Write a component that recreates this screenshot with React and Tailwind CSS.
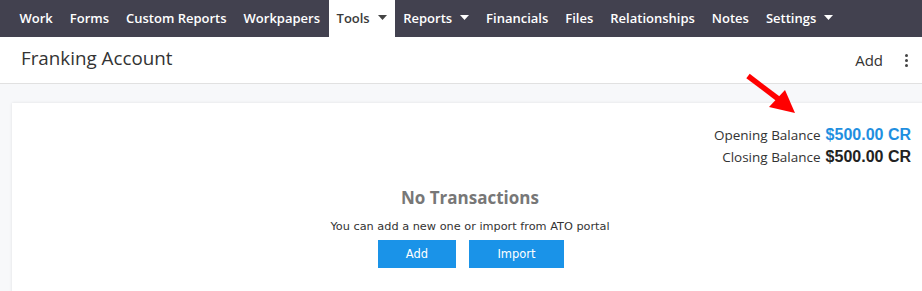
import React from "react";

function Caret({ color = "#fff" }) {
  return (
    <svg width="9" height="5" viewBox="0 0 9 5" className="ml-[8px] mt-[-2px]">
      <path d="M0 0 H9 L4.5 5 Z" fill={color} />
    </svg>
  );
}

const items = [
  { label: "Work" },
  { label: "Forms" },
  { label: "Custom Reports" },
  { label: "Workpapers" },
  { label: "Tools", caret: true, active: true },
  { label: "Reports", caret: true },
  { label: "Financials" },
  { label: "Files" },
  { label: "Relationships" },
  { label: "Notes" },
  { label: "Settings", caret: true },
];

export default function App() {
  return (
    <div className="relative w-[922px] h-[291px] overflow-hidden bg-[#f7f8fa] font-['Open_Sans',sans-serif]">
      <nav className="flex h-[37px] items-stretch bg-[#42414f] pl-[11px]">
        {items.map((it) => (
          <div
            key={it.label}
            className={
              it.active
                ? "flex items-center bg-white px-[8px] text-[13px] font-semibold text-[#3a3a3a]"
                : "flex items-center px-[8.5px] text-[13px] font-semibold text-white"
            }
          >
            <span>{it.label}</span>
            {it.caret && <Caret color={it.active ? "#444" : "#fff"} />}
          </div>
        ))}
      </nav>
      <header className="flex h-[47px] items-center justify-between border-b border-[#e1e1e1] bg-white pl-[21px] pr-[14px]">
        <h1 className="text-[18.8px] text-[#333] mt-[-4px]">Franking Account</h1>
        <div className="flex items-center">
          <span className="text-[15px] text-[#333]">Add</span>
          <div className="ml-[22px] flex flex-col gap-[2px]">
            <span className="block h-[3px] w-[3px] rounded-full bg-[#444]" />
            <span className="block h-[3px] w-[3px] rounded-full bg-[#444]" />
            <span className="block h-[3px] w-[3px] rounded-full bg-[#444]" />
          </div>
        </div>
      </header>
      <main className="pl-[12px] pt-[19px]">
        <section className="h-[200px] w-[916px] bg-white shadow-[0_0_3px_rgba(0,0,0,0.1)]">
          <div className="flex flex-col items-end pr-[17px] pt-[21px] leading-[22px] text-[#333]">
            <div className="flex items-baseline">
              <span className="text-[13.5px]">Opening Balance</span>
              <span className="ml-[5px] font-['Liberation_Sans',sans-serif] text-[16px] font-bold text-[#1f8fe0]">
                $500.00 CR
              </span>
            </div>
            <div className="flex items-baseline">
              <span className="text-[13.5px]">Closing Balance</span>
              <span className="ml-[5px] font-['Liberation_Sans',sans-serif] text-[16px] font-bold text-[#222]">
                $500.00 CR
              </span>
            </div>
          </div>
          <div className="mt-[17px] flex flex-col items-center">
            <h2 className="text-[17px] font-bold text-[#777]">No Transactions</h2>
            <p className="mt-[8px] font-['DejaVu_Sans',sans-serif] text-[11.3px] text-[#333]">
              You can add a new one or import from ATO portal
            </p>
            <div className="mt-[5px] ml-[2px] flex gap-[13px]">
              <button className="h-[28px] w-[78px] bg-[#1a93e8] font-['DejaVu_Sans',sans-serif] text-[11.5px] text-white">
                Add
              </button>
              <button className="h-[28px] w-[95px] bg-[#1a93e8] font-['DejaVu_Sans',sans-serif] text-[11.5px] text-white">
                Import
              </button>
            </div>
          </div>
        </section>
      </main>
      <svg
        className="absolute left-[744px] top-[72px]"
        width="56"
        height="46"
        viewBox="0 0 56 46"
      >
        <line x1="4" y1="4" x2="37" y2="29" stroke="#f00" strokeWidth="5.5" />
        <path d="M51 41 L25 35 L41 18 Z" fill="#f00" />
      </svg>
    </div>
  );
}
